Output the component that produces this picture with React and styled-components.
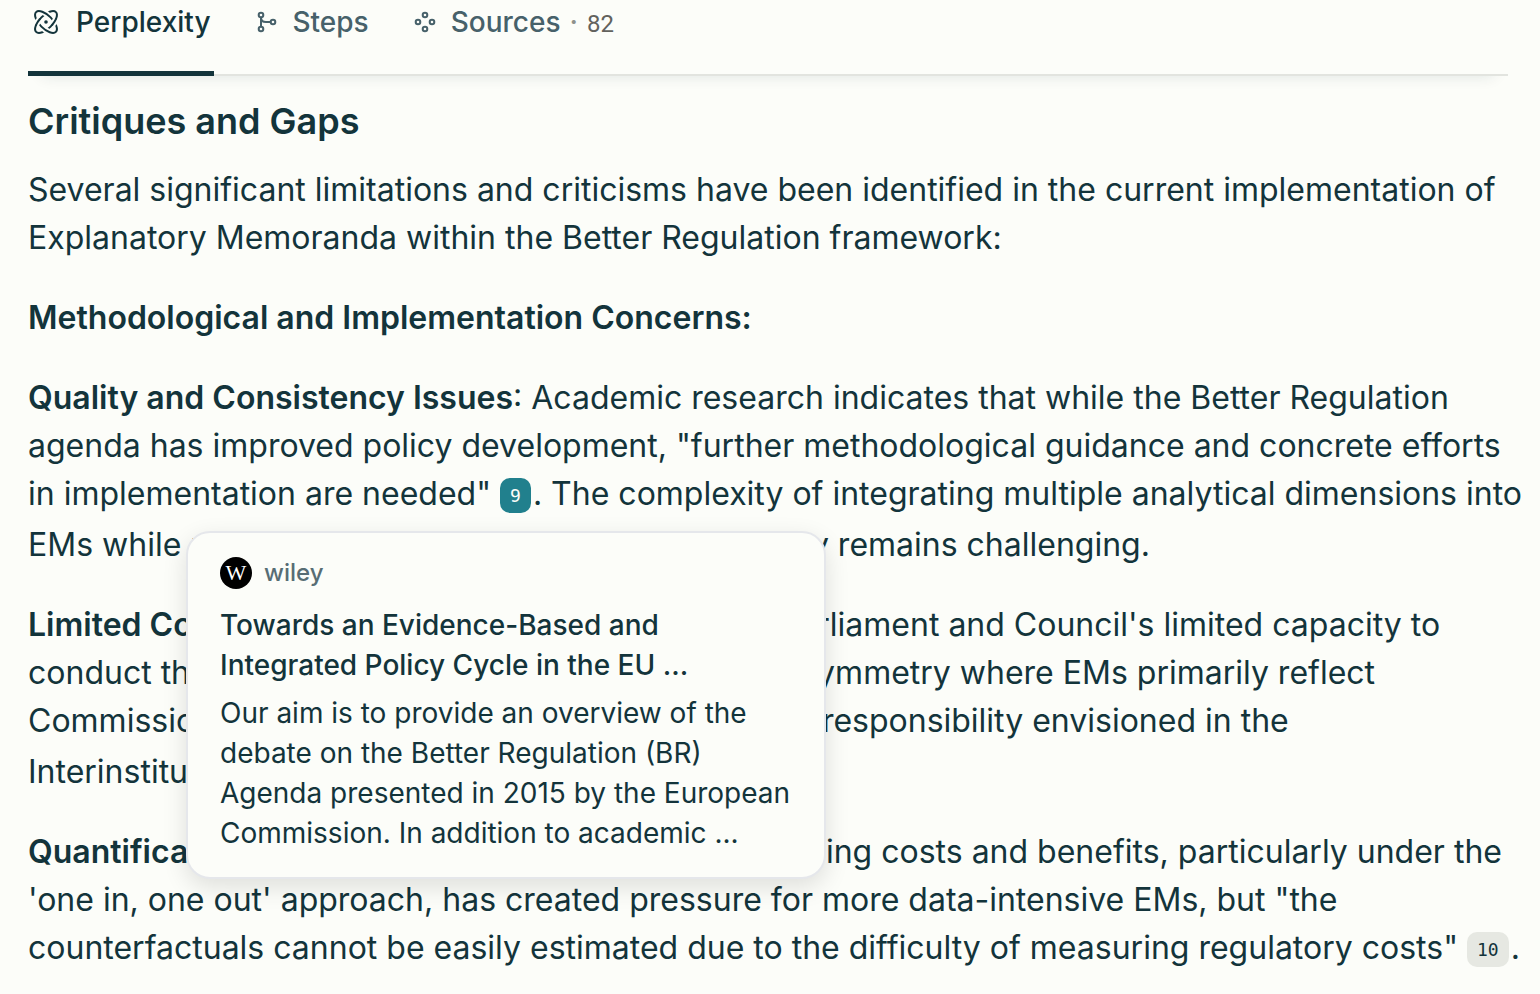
import React from "react";
import styled, { createGlobalStyle } from "styled-components";

const GlobalStyle = createGlobalStyle`
  * {
    box-sizing: border-box;
  }

  body {
    margin: 0;
    background: #fcfdf9;
    color: #13343b;
    font-family: Inter, "Liberation Sans", sans-serif;
  }
`;

const Page = styled.main`
  padding: 0 32px 16px 28px;
`;

const TabBar = styled.nav`
  display: flex;
  gap: 39px;
  height: 76px;
  border-bottom: 2px solid #e2e4df;
  box-shadow: 0 14px 14px -14px rgba(19, 52, 59, 0.12);
`;

const Tab = styled.button`
  display: flex;
  align-items: flex-start;
  gap: 14px;
  height: 76px;
  padding: 0 3px 0 2px;
  border: 0;
  border-bottom: 5px solid ${(p) => (p.$active ? "#13343b" : "transparent")};
  background: none;
  color: ${(p) => (p.$active ? "#13343b" : "#47616a")};
  font-family: inherit;
  font-size: 28px;
  font-weight: 500;
  line-height: 44px;
  cursor: pointer;

  svg {
    flex: none;
    height: 44px;
  }
`;

const Dot = styled.span`
  margin: 0 9px;
  color: #8f928c;
`;

const Count = styled.span`
  color: #62625d;
  font-family: Roboto, sans-serif;
  font-size: 24px;
  font-weight: 400;
`;

const Heading = styled.h2`
  margin: 21px 0;
  font-size: 36px;
  font-weight: 600;
  line-height: 48px;
`;

const Paragraph = styled.div`
  position: relative;
  margin-bottom: 32px;
  font-size: 32px;
  line-height: 48px;
  white-space: nowrap;

  &:last-child {
    margin-bottom: 0;
  }

  strong {
    font-weight: 600;
  }
`;

const CiteBadge = styled.button`
  height: 35px;
  margin: 0 2px 8px 0;
  padding: 1px 10px 0;
  border: 0;
  border-radius: 10px;
  background: ${(p) => (p.$active ? "#21808d" : "#e6e8e2")};
  color: ${(p) => (p.$active ? "#fcfdf9" : "#13343b")};
  font-family: "DejaVu Sans Mono", monospace;
  font-size: 18px;
  line-height: 34px;
  vertical-align: 3px;
  cursor: pointer;
`;

const Popover = styled.aside`
  position: absolute;
  top: 157px;
  left: 158px;
  z-index: 1;
  width: 640px;
  padding: 24px 32px;
  border: 2px solid #e5e7eb;
  border-radius: 24px;
  background: #fcfdf9;
  box-shadow: 0 8px 24px rgba(0, 0, 0, 0.12);
  font-size: 28px;
  line-height: 40px;
`;

const Source = styled.div`
  display: flex;
  align-items: center;
  gap: 12px;
  height: 32px;
  margin-bottom: 16px;
  color: #576d74;
  font-size: 24px;
  font-weight: 500;
`;

const Favicon = styled.span`
  width: 32px;
  height: 32px;
  border-radius: 50%;
  background: #000;
  color: #fff;
  font-family: "Liberation Serif", serif;
  font-size: 22px;
  font-weight: 400;
  line-height: 32px;
  text-align: center;
`;

const Title = styled.a`
  display: block;
  margin-bottom: 8px;
  color: inherit;
  font-weight: 500;
  text-decoration: none;
`;

// two woven rings: each passes over the other at two of the four crossings
const OVERPASS = "M-9 -5A14 6.5 0 0 1 -2.5 -6.4M9 5A14 6.5 0 0 1 2.5 6.4";

const PerplexityIcon = () => (
  <svg width="32" height="44" viewBox="-16 -22 32 44" fill="none" stroke="currentColor" strokeWidth="2">
    <ellipse rx="14" ry="6.5" transform="rotate(-45)" />
    <g transform="rotate(45)">
      <path d={OVERPASS} stroke="#fcfdf9" strokeWidth="6" />
      <ellipse rx="14" ry="6.5" />
    </g>
    <g transform="rotate(-45)">
      <path d={OVERPASS} stroke="#fcfdf9" strokeWidth="6" />
      <path d={OVERPASS} strokeLinecap="round" />
    </g>
    <circle r="1.8" fill="currentColor" stroke="none" />
  </svg>
);

const StepsIcon = () => (
  <svg width="24" height="44" viewBox="-12 -22 24 44" fill="none" stroke="currentColor" strokeWidth="2">
    <circle cx="-6" cy="-7" r="2.3" />
    <circle cx="-6" cy="7" r="2.3" />
    <circle cx="6" cy="0" r="2.3" />
    <path d="M-6 -4.5V4.5M-6 -4.5C-6 -1 -4 0 -1 0H3.5" />
  </svg>
);

const SourcesIcon = () => (
  <svg width="24" height="44" viewBox="-12 -22 24 44" fill="none" stroke="currentColor" strokeWidth="2">
    <circle cx="0" cy="-7" r="2.3" />
    <circle cx="0" cy="7" r="2.3" />
    <circle cx="-7" cy="0" r="2.3" />
    <circle cx="7" cy="0" r="2.3" />
  </svg>
);

const Cite = ({ number, active }) => (
  <CiteBadge type="button" $active={active}>
    {number}
  </CiteBadge>
);

const SourcePreview = () => (
  <Popover>
    <Source>
      <Favicon>W</Favicon>
      wiley
    </Source>
    <Title href="#source-9">
      Towards an Evidence-Based and
      <br />
      Integrated Policy Cycle in the EU ...
    </Title>
    Our aim is to provide an overview of the
    <br />
    debate on the Better Regulation (BR)
    <br />
    Agenda presented in 2015 by the European
    <br />
    Commission. In addition to academic ...
  </Popover>
);

const App = () => {
  return (
    <>
      <GlobalStyle />
      <Page>
        <TabBar>
          <Tab type="button" $active>
            <PerplexityIcon />
            Perplexity
          </Tab>
          <Tab type="button">
            <StepsIcon />
            Steps
          </Tab>
          <Tab type="button">
            <SourcesIcon />
            <span>
              Sources
              <Dot>·</Dot>
              <Count>82</Count>
            </span>
          </Tab>
        </TabBar>

        <Heading>Critiques and Gaps</Heading>
        <Paragraph>
          Several significant limitations and criticisms have been identified in the current implementation of
          <br />
          Explanatory Memoranda within the Better Regulation framework:
        </Paragraph>
        <Paragraph>
          <strong>Methodological and Implementation Concerns:</strong>
        </Paragraph>
        <Paragraph>
          <strong>Quality and Consistency Issues</strong>: Academic research indicates that while the Better Regulation
          <br />
          agenda has improved policy development, "further methodological guidance and concrete efforts
          <br />
          in implementation are needed" <Cite number={9} active />. The complexity of integrating multiple analytical
          dimensions into
          <br />
          EMs while maintaining public accessibility and clarity remains challenging.
          <SourcePreview />
        </Paragraph>
        <Paragraph>
          <strong>Limited Counterbalancing</strong>: Despite the European Parliament and Council's limited capacity to
          <br />
          conduct their own policy assessments creates an asymmetry where EMs primarily reflect
          <br />
          Commission perspectives, rather than <Cite number={4} /> the shared responsibility envisioned in the
          <br />
          Interinstitutional Agreement.
        </Paragraph>
        <Paragraph>
          <strong>Quantification Challenges</strong>: The demands of quantifying costs and benefits, particularly under
          the
          <br />
          'one in, one out' approach, has created pressure for more data-intensive EMs, but "the
          <br />
          counterfactuals cannot be easily estimated due to the difficulty of measuring regulatory costs"{" "}
          <Cite number={10} />.
        </Paragraph>
      </Page>
    </>
  );
};

export default App;
